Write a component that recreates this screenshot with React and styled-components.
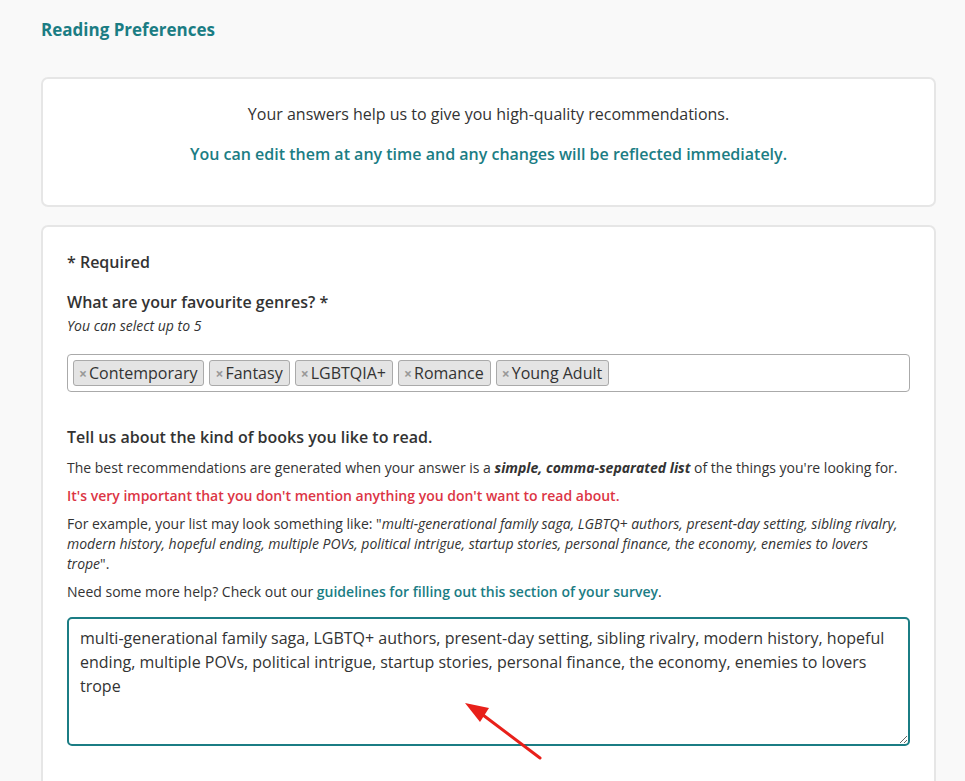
import React, { useState } from 'react'
import styled, { createGlobalStyle } from 'styled-components'

const teal = '#1b7d84'

const GlobalStyle = createGlobalStyle`
  * { box-sizing: border-box; }
  body {
    margin: 0;
    background: #f9f9f9;
    font-family: "Open Sans", "Noto Sans", sans-serif;
    color: #333;
  }
`

const Page = styled.div`
  position: relative;
  width: 895px;
  margin-left: 41px;
  padding-top: 18px;
`

const Title = styled.h1`
  margin: 0 0 35px;
  font-size: 17px;
  font-weight: 700;
  line-height: 24px;
  color: ${teal};
`

const Card = styled.section`
  background: #fff;
  border: 2px solid #e6e6e6;
  border-radius: 7px;
  padding: ${(p) => p.$pad || '24px'};
  margin-bottom: 18px;
  text-align: ${(p) => (p.$center ? 'center' : 'left')};
`

const Intro = styled.p`
  margin: 0 0 ${(p) => p.$gap || '0'};
  font-size: 16px;
  line-height: 24px;
  color: ${(p) => (p.$accent ? teal : '#333')};
  font-weight: ${(p) => (p.$accent ? 600 : 400)};
`

const Label = styled.div`
  font-size: 16px;
  font-weight: 600;
  line-height: 24px;
  color: #333;
  margin-bottom: ${(p) => p.$gap || '0'};
`

const Hint = styled.div`
  margin-top: 2px;
  margin-bottom: 18px;
  font-size: 14px;
  font-style: italic;
  line-height: 20px;
`

const Select = styled.div`
  display: flex;
  flex-wrap: wrap;
  gap: 5px;
  align-items: center;
  min-height: 38px;
  border: 1px solid #aaa;
  border-radius: 4px;
  padding: 5px;
  margin-bottom: 33px;
  background: #fff;
`

const Tag = styled.span`
  display: inline-flex;
  align-items: center;
  height: 26px;
  padding: 0 6px 0 5px;
  background: #e4e4e4;
  border: 1px solid #aaa;
  border-radius: 3px;
  font-size: 16px;
  color: #333;
`

const Remove = styled.span`
  color: #999;
  font-size: 14px;
  font-weight: 700;
  margin-right: 2px;
  cursor: pointer;
`

const Text = styled.p`
  margin: 0 0 8px;
  font-size: 14px;
  line-height: 20px;
  color: ${(p) => (p.$warn ? '#dc3545' : '#333')};
  font-weight: ${(p) => (p.$warn ? 600 : 400)};
`

const Link = styled.a`
  color: ${teal};
  font-weight: 600;
  text-decoration: none;
`

const Answer = styled.textarea`
  display: block;
  width: 100%;
  height: 129px;
  margin-top: 15px;
  padding: 7px 11px;
  border: 2px solid ${teal};
  border-radius: 5px;
  font-family: inherit;
  font-size: 16px;
  line-height: 24px;
  color: #333;
  outline: none;
  resize: vertical;
`

const Arrow = styled.svg`
  position: absolute;
  left: 378px;
  top: 695px;
  pointer-events: none;
`

const genres = ['Contemporary', 'Fantasy', 'LGBTQIA+', 'Romance', 'Young Adult']

export default function App() {
  const [answer, setAnswer] = useState(
    'multi-generational family saga, LGBTQ+ authors, present-day setting, sibling rivalry, modern history, hopeful ending, multiple POVs, political intrigue, startup stories, personal finance, the economy, enemies to lovers trope'
  )

  return (
    <>
      <GlobalStyle />
      <Page>
        <Title>Reading Preferences</Title>
        <Card $center $pad="23px 24px 39px">
          <Intro $gap="16px">Your answers help us to give you high-quality recommendations.</Intro>
          <Intro $accent>You can edit them at any time and any changes will be reflected immediately.</Intro>
        </Card>
        <Card $pad="23px 24px 40px">
          <Label $gap="16px">* Required</Label>
          <Label>What are your favourite genres? *</Label>
          <Hint>You can select up to 5</Hint>
          <Select>
            {genres.map((g) => (
              <Tag key={g}>
                <Remove>×</Remove>
                {g}
              </Tag>
            ))}
          </Select>
          <Label $gap="9px">Tell us about the kind of books you like to read.</Label>
          <Text>
            The best recommendations are generated when your answer is a <b><i>simple, comma-separated list</i></b> of the things you're looking for.
          </Text>
          <Text $warn>It's very important that you don't mention anything you don't want to read about.</Text>
          <Text>
            For example, your list may look something like: "<i>multi-generational family saga, LGBTQ+ authors, present-day setting, sibling rivalry, modern history, hopeful ending, multiple POVs, political intrigue, startup stories, personal finance, the economy, enemies to lovers trope</i>".
          </Text>
          <Text>
            Need some more help? Check out our <Link href="#">guidelines for filling out this section of your survey</Link>.
          </Text>
          <Answer value={answer} onChange={(e) => setAnswer(e.target.value)} spellCheck={false} />
        </Card>
        <Arrow width="140" height="80" viewBox="0 0 140 80">
          <line x1="121" y1="63" x2="60" y2="17" stroke="#e8201a" strokeWidth="3" strokeLinecap="round" />
          <polygon points="46,8 70,13 61,27" fill="#e8201a" />
        </Arrow>
      </Page>
    </>
  )
}
